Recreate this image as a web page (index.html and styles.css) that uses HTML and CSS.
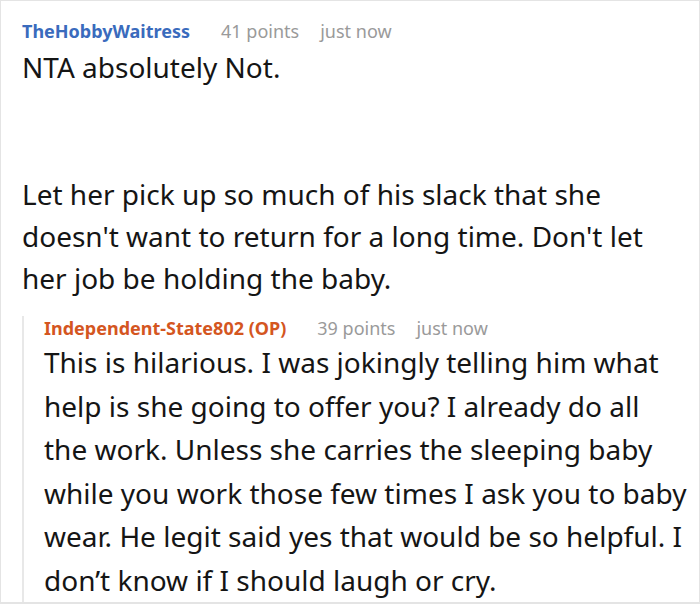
FILE: index.html
```html
<!DOCTYPE html>
<html>
<head>
<meta charset="utf-8">
<link rel="stylesheet" href="styles.css">
</head>
<body>
<div class="card">
  <div class="meta">
    <span class="user user-blue">TheHobbyWaitress</span>
    <span class="info">41 points</span>
    <span class="info time">just now</span>
  </div>
  <p class="lead">NTA absolutely Not.</p>
  <p class="body">Let her pick up so much of his slack that she<br>doesn't want to return for a long time. Don't let<br>her job be holding the baby.</p>
  <div class="reply">
    <div class="meta meta-reply">
      <span class="user user-orange">Independent-State802 (OP)</span>
      <span class="info">39 points</span>
      <span class="info time">just now</span>
    </div>
    <p class="reply-body">This is hilarious. I was jokingly telling him what<br>help is she going to offer you? I already do all<br>the work. Unless she carries the sleeping baby<br>while you work those few times I ask you to baby<br>wear. He legit said yes that would be so helpful. I<br>don’t know if I should laugh or cry.</p>
  </div>
</div>
</body>
</html>
```

FILE: styles.css
```css
html, body {
  margin: 0;
  padding: 0;
  background: #ffffff;
}

.card {
  width: 700px;
  height: 604px;
  box-sizing: border-box;
  border: 1px solid #e4e4e4;
  border-bottom-width: 2px;
  padding: 18px 0 0 21px;
  font-family: "Noto Sans", "Open Sans", sans-serif;
  color: #151515;
  overflow: hidden;
}

.meta {
  display: flex;
  gap: 31px;
  font-size: 18px;
  line-height: 24px;
  white-space: nowrap;
}

.meta .time {
  margin-left: -10px;
}

.user {
  font-weight: 700;
}

.user-blue {
  color: #3a6bbd;
}

.user-orange {
  color: #d4561f;
}

.info {
  color: #9a9a9a;
}

.lead {
  margin: 6px 0 0;
  font-size: 28px;
  line-height: 36px;
}

.body {
  margin: 88px 0 0;
  font-size: 28px;
  line-height: 42px;
  white-space: nowrap;
}

.reply {
  margin-top: 27px;
  border-left: 2px solid #e8e8e8;
  padding-left: 20px;
}

.meta-reply {
  margin-top: -10px;
}

.reply-body {
  margin: 1px 0 -6px;
  font-size: 28px;
  line-height: 43.5px;
  white-space: nowrap;
}
```
